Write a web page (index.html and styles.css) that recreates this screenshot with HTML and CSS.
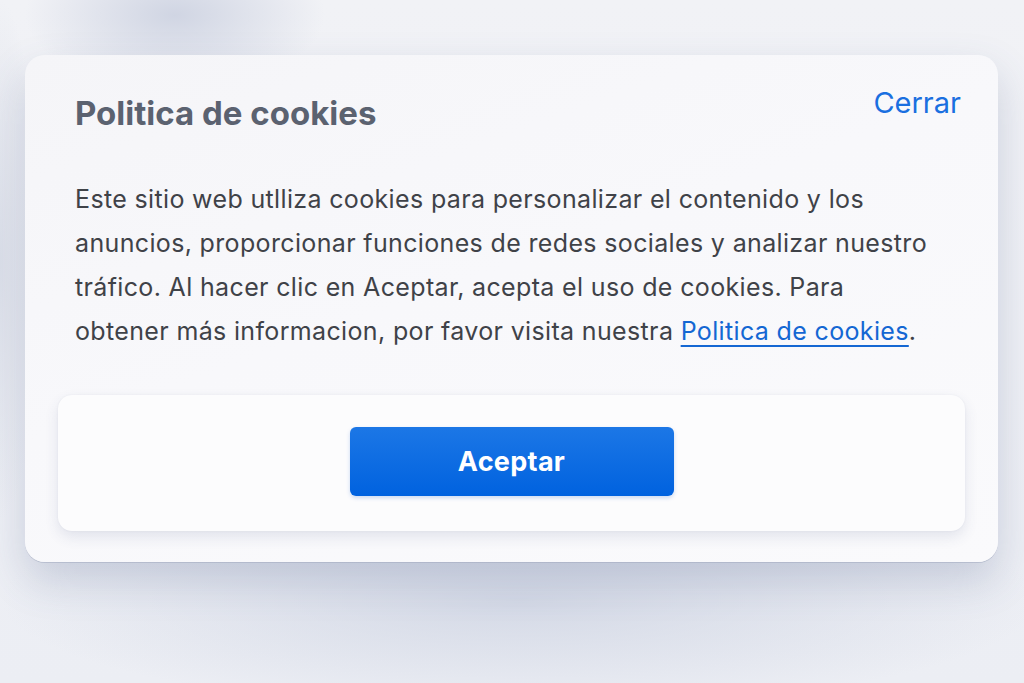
FILE: index.html
```html
<!DOCTYPE html>
<html lang="es">
<head>
    <meta charset="UTF-8">
    <meta name="viewport" content="width=device-width, initial-scale=1.0">
    <title>Politica de cookies</title>
    <link rel="stylesheet" href="styles.css">
</head>
<body>
    <div class="cookie-card">
        <div class="cookie-header">
            <h2>Politica de cookies</h2>
            <a href="#" class="close-link">Cerrar</a>
        </div>
        <p class="cookie-text">
            Este sitio web utlliza cookies para personalizar el contenido y los
            anuncios, proporcionar funciones de redes sociales y analizar nuestro
            tráfico. Al hacer clic en Aceptar, acepta el uso de cookies. Para
            obtener más informacion, por favor visita nuestra <a href="#" class="policy-link">Politica de cookies</a>.
        </p>
        <div class="actions">
            <button type="button" class="accept-btn">Aceptar</button>
        </div>
    </div>
</body>
</html>
```

FILE: styles.css
```css
html, body {
    height: 100%;
}
body {
    font-family: Inter, 'Liberation Sans', Arial, sans-serif;
    margin: 0;
    padding: 55px 26px 0 25px;
    box-sizing: border-box;
    background-color: #eef0f5;
    background-image:
        radial-gradient(ellipse 150px 75px at 175px 15px, rgba(208, 213, 227, 1), rgba(208, 213, 227, 0) 100%),
        radial-gradient(ellipse 40px 260px at 0 260px, rgba(215, 219, 230, 0.8), rgba(215, 219, 230, 0) 100%),
        radial-gradient(ellipse 520px 110px at 520px 600px, rgba(205, 211, 226, 0.8), rgba(205, 211, 226, 0) 100%),
        linear-gradient(180deg, #f1f2f6 0%, #eceef4 100%);
}
.cookie-card {
    background: linear-gradient(160deg, #f5f5f8 0%, #f8f8fb 45%, #fafafc 100%);
    border-radius: 20px;
    padding: 30px 37px 31px 50px;
    box-shadow: 0 1px 0 rgba(160, 168, 190, 0.5), 0 18px 40px rgba(70, 85, 130, 0.22);
}
.cookie-header {
    display: flex;
    justify-content: space-between;
    align-items: flex-start;
}
.cookie-header h2 {
    margin: 8px 0 0;
    font-size: 33px;
    line-height: 40px;
    font-weight: 700;
    color: #5b6270;
}
.close-link {
    font-size: 29px;
    line-height: 36px;
    color: #1a6fe0;
    text-decoration: none;
}
.cookie-text {
    margin: 44px 0 0;
    max-width: 866px;
    font-size: 25px;
    line-height: 44px;
    letter-spacing: 0.35px;
    color: #3f4248;
}
.policy-link {
    color: #1467d3;
    text-decoration: underline;
    text-decoration-thickness: 2px;
    text-underline-offset: 5px;
}
.actions {
    margin: 42px -4px 0 -17px;
    padding: 32px 0 35px;
    display: flex;
    justify-content: center;
    background-color: #fcfcfd;
    border-radius: 14px;
    box-shadow: 0 6px 14px rgba(60, 75, 120, 0.12), 0 0 2px rgba(60, 75, 120, 0.08);
}
.accept-btn {
    width: 324px;
    height: 69px;
    border: none;
    border-radius: 6px;
    background: linear-gradient(180deg, #1c77e6 0%, #0062df 100%);
    color: #fff;
    font-family: Inter, 'Liberation Sans', Arial, sans-serif;
    font-size: 27px;
    font-weight: 700;
    letter-spacing: 0.3px;
    cursor: pointer;
    box-shadow: 0 2px 4px rgba(0, 80, 200, 0.2);
}
```
